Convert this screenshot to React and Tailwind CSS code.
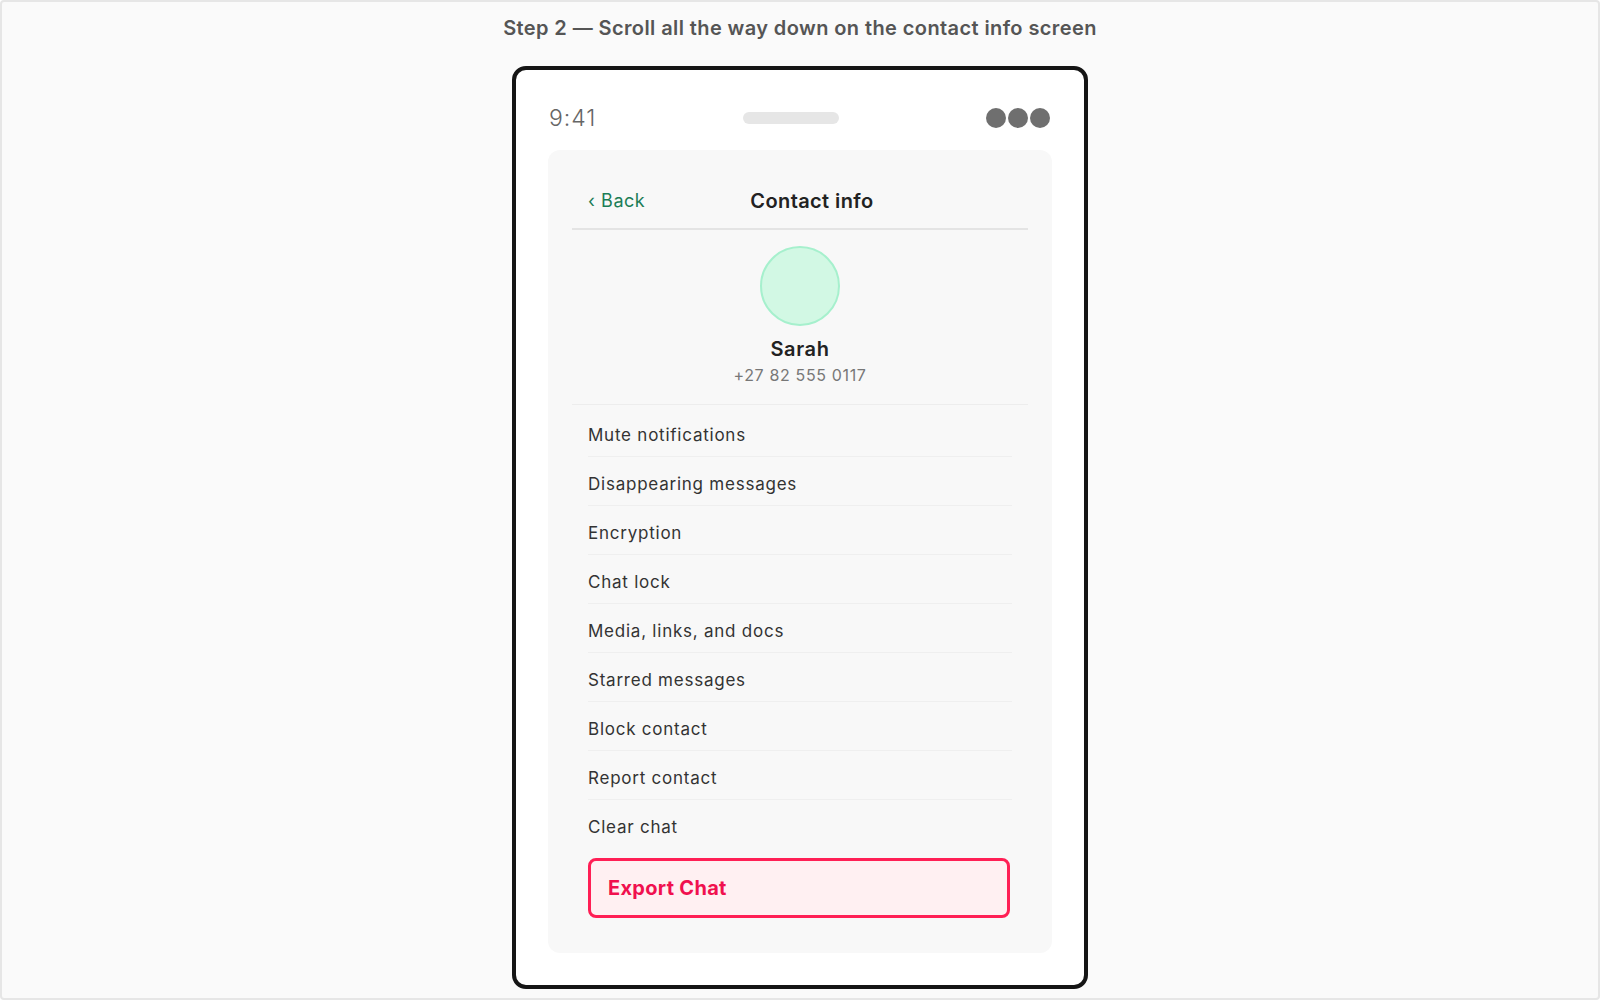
import React from 'react'

const items = [
  'Mute notifications',
  'Disappearing messages',
  'Encryption',
  'Chat lock',
  'Media, links, and docs',
  'Starred messages',
  'Block contact',
  'Report contact',
  'Clear chat',
]

const StatusBar = () => (
  <div className="flex justify-between items-center mt-[36px] mb-[20px] h-6">
    <span className="pl-px font-light tracking-[0.04em] text-[#666] text-[23px] leading-6">9:41</span>
    <div className="bg-[#e6e6e6] rounded-full w-24 h-3" />
    <div className="flex gap-[2px] pr-[2px]">
      <span className="bg-[#6f6f6f] rounded-full w-5 h-5" />
      <span className="bg-[#6f6f6f] rounded-full w-5 h-5" />
      <span className="bg-[#6f6f6f] rounded-full w-5 h-5" />
    </div>
  </div>
)

export default function App() {
  return (
    <div className="flex flex-col items-center bg-[#fafafa] border-2 border-[#e6e6e6] rounded-sm h-[1000px] font-['Inter','Noto_Sans',sans-serif]">
      <h1 className="mt-3 font-semibold tracking-[0.02em] text-[#555] text-[20px] leading-7">
        Step 2 — Scroll all the way down on the contact info screen
      </h1>

      <div className="bg-white mt-6 px-8 pb-8 border-4 border-[#151515] rounded-[14px] w-[576px]">
        <StatusBar />

        <div className="bg-[#f8f8f8] px-6 pt-6 pb-[35px] rounded-xl">
          {/* header */}
          <div className="flex items-center px-4 py-[15px] border-[#e4e4e4] border-b-2">
            <button className="tracking-[0.03em] text-[#1b7d56] text-[18px] leading-6">‹ Back</button>
            <h2 className="ml-[105px] font-semibold tracking-[0.02em] text-[#222] text-[20px] leading-6">Contact info</h2>
          </div>

          {/* profile */}
          <div className="flex flex-col items-center pt-4 pb-[17px] border-[#ededed] border-b">
            <div className="bg-[#d2f8e4] border-[#a6f0cd] border-2 rounded-full w-20 h-20" />
            <div className="mt-[9px] font-semibold tracking-[0.03em] text-[#222] text-[20px] leading-7">Sarah</div>
            <div className="tracking-[0.04em] text-[#777] text-base leading-6">+27 82 555 0117</div>
          </div>

          {/* options */}
          <ul className="pt-[3px]">
            {items.map((label, i) => (
              <li
                key={label}
                className={
                  'mx-4 pt-[15px] pb-[9px] text-[#333] text-[17px] leading-6 tracking-[0.045em] ' +
                  (i < items.length - 1 ? 'border-b border-[#efefef]' : '')
                }
              >
                {label}
              </li>
            ))}
          </ul>

          <button className="flex items-center bg-[#fff0f2] mx-4 mt-[10px] pl-[17px] border-[#ff1f55] border-[3px] rounded-lg w-[422px] h-[60px] font-bold tracking-[0.015em] text-[#f0114f] text-[20px]">
            Export Chat
          </button>
        </div>
      </div>
    </div>
  )
}
